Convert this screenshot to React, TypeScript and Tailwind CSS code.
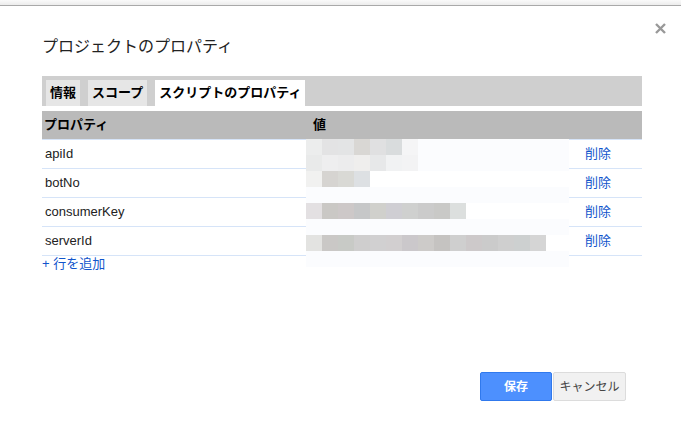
import React from "react";

type Cell = string;

// blurred value cells, 16px squares laid over the value column
const blurRows: { cells: Cell[]; rest: string }[] = [
  { cells: ["bg-[#eceded]", "bg-[#e3e3e4]", "bg-[#e3e4e5]", "bg-[#d9d7d4]", "bg-[#e0e0e1]", "bg-[#d9dcdd]", "bg-[#f5f5f6]"], rest: "bg-[#fbfcfe]" },
  { cells: ["bg-[#e9eaea]", "bg-[#eeeeef]", "bg-[#ececed]", "bg-[#efeeed]", "bg-[#e7e8e9]", "bg-[#f1f2f3]", "bg-[#f3f3f4]"], rest: "bg-[#fbfcfe]" },
  { cells: ["bg-[#f1f1f0]", "bg-[#d6d4d1]", "bg-[#d9d9d5]", "bg-[#dde0e3]"], rest: "bg-white" },
  { cells: [], rest: "bg-[#fbfcfe]" },
  {
    cells: ["bg-[#e3e0e2]", "bg-[#cac8c5]", "bg-[#cdc8c8]", "bg-[#c6c7c8]", "bg-[#d0d0cc]", "bg-[#cfced3]", "bg-[#cfd0cf]", "bg-[#cbcbcb]", "bg-[#c9c9c7]", "bg-[#dcdfde]"],
    rest: "bg-white",
  },
  { cells: [], rest: "bg-[#fbfcfe]" },
  {
    cells: [
      "bg-[#e3e3e1]", "bg-[#cac8c6]", "bg-[#c8cac6]", "bg-[#cfcece]", "bg-[#d1d0d1]", "bg-[#d2cfd0]", "bg-[#cbc8cb]", "bg-[#cdcbc9]",
      "bg-[#c5c3c1]", "bg-[#cfcfcf]", "bg-[#cdc9ca]", "bg-[#cbcbcb]", "bg-[#cfcfcf]", "bg-[#cdd0d0]", "bg-[#d5d5d5]",
    ],
    rest: "bg-white",
  },
  { cells: [], rest: "bg-[#fbfcfe]" },
];

const props = ["apiId", "botNo", "consumerKey", "serverId"];

function CloseIcon() {
  return (
    <svg width="11" height="11" viewBox="0 0 11 11" className="text-[#999]">
      <path d="M1 1 L10 10 M10 1 L1 10" stroke="currentColor" strokeWidth="2.4" />
    </svg>
  );
}

export default function App() {
  return (
    <div className="relative flex h-[423px] w-[681px] flex-col bg-white font-['Liberation_Sans','Noto_Sans_CJK_JP',sans-serif] text-[13px] text-[#222]">
      <div className="h-[6px] border-b border-[#a9a9a9] bg-gradient-to-b from-[#fafafa] to-[#ececec]" />

      <button className="absolute right-[15px] top-[23px]">
        <CloseIcon />
      </button>

      <div className="px-[42px] pr-[39px]">
        <h1 className="mt-[31px] text-[16px] leading-5 text-[#222]">プロジェクトのプロパティ</h1>

        <div className="mt-[19px] flex h-[30px] items-end gap-2 bg-[#cfcfcf] pl-1">
          <div className="flex h-[26px] items-center bg-[#e6e6e6] px-1 font-bold text-black">情報</div>
          <div className="flex h-[26px] items-center bg-[#e6e6e6] px-1 font-bold text-black">スコープ</div>
          <div className="flex h-[26px] items-center bg-white px-1 font-bold text-black">スクリプトのプロパティ</div>
        </div>

        <div className="mt-[5px]">
          <div className="grid h-[29px] grid-cols-[271px_272px_57px] items-center border-b border-[#d6e4f8] bg-[#bababa] font-bold text-black">
            <div className="pl-[2px]">プロパティ</div>
            <div>値</div>
            <div />
          </div>
          {props.map((p) => (
            <div key={p} className="grid h-[29px] grid-cols-[271px_272px_57px] items-center border-b border-[#d6e4f8]">
              <div className="pl-[3px] text-[#222]">{p}</div>
              <div />
              <div className="text-[#15c]">削除</div>
            </div>
          ))}
        </div>

        <div className="leading-4 text-[#15c]">+ 行を追加</div>
      </div>

      <div className="mt-auto mb-[22px] mr-[55px] flex justify-end">
        <button className="h-[29px] w-[72px] rounded-[2px] border border-[#3079ed] bg-[#4d90fe] text-[12px] font-bold text-white">
          保存
        </button>
        <button className="ml-px h-[29px] w-[73px] rounded-[2px] border border-[#dcdcdc] bg-[#f1f1f1] text-[12px] text-[#444]">
          キャンセル
        </button>
      </div>

      <div className="absolute left-[306px] top-[139px] w-[263px]">
        {blurRows.map((r, i) => (
          <div key={i} className={`flex h-4 ${r.rest}`}>
            {r.cells.map((c, j) => (
              <div key={j} className={`h-4 w-4 ${c}`} />
            ))}
          </div>
        ))}
      </div>
    </div>
  );
}
